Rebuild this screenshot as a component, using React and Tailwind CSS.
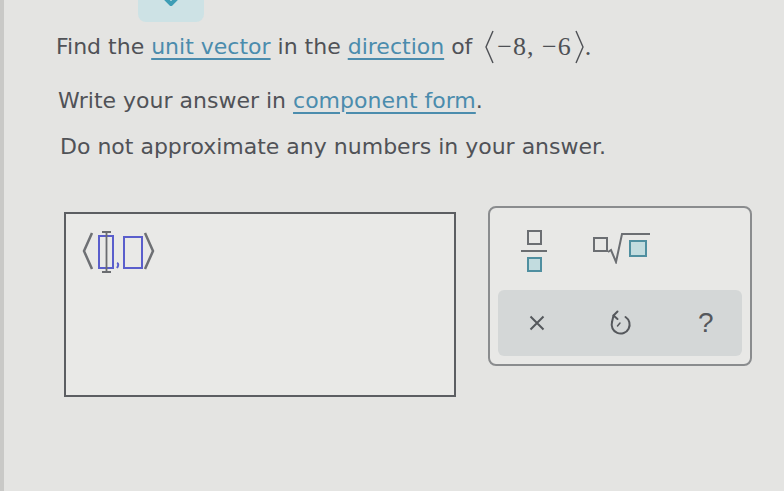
import React from "react";

// small outlined box used in the math templates
function Slot({ teal }) {
  return (
    <span
      className={
        teal
          ? "inline-block w-[15px] h-[15px] border-2 border-[#4f8fa0] bg-[#c2dcdf]"
          : "inline-block w-[15px] h-[15px] border-2 border-[#6b6e72]"
      }
    />
  );
}

function VectorTemplate() {
  return (
    <svg width="76" height="46" viewBox="0 0 76 46" fill="none">
      {/* angle brackets */}
      <path d="M11 4 L3 22 L11 40" stroke="#6e7074" strokeWidth="2.5" />
      <path d="M64 4 L72 22 L64 40" stroke="#6e7074" strokeWidth="2.5" />
      {/* first slot + cursor */}
      <rect x="18" y="7" width="14" height="32" stroke="#5a5ecc" strokeWidth="2" />
      <path d="M21 3 H30 M25.5 3 V43 M21 43 H30" stroke="#6a6c70" strokeWidth="1.8" />
      {/* comma */}
      <path d="M36 34 q2.5 1 0 5" stroke="#5a5ecc" strokeWidth="2" />
      {/* second slot */}
      <rect x="43" y="8" width="18" height="31" stroke="#5a5ecc" strokeWidth="2" />
    </svg>
  );
}

function Angle({ right }) {
  return (
    <svg width="11" height="34" viewBox="0 0 11 34" fill="none" className={right ? "ml-[2px]" : "mr-[2px]"}>
      <path d={right ? "M2 1 L9 17 L2 33" : "M9 1 L2 17 L9 33"} stroke="#4e5055" strokeWidth="1.4" />
    </svg>
  );
}

function Fraction() {
  return (
    <div className="flex flex-col items-center gap-[5px]">
      <Slot />
      <span className="block w-[26px] h-[2px] bg-[#6b6e72]" />
      <Slot teal />
    </div>
  );
}

function SqrtIcon() {
  return (
    <div className="flex items-end">
      <span className="mb-[5px]">
        <Slot />
      </span>
      <svg width="44" height="32" viewBox="0 0 44 32" fill="none" className="-ml-[1px]">
        <path d="M1 20 L4 18 L9 30 L15 2 H43" stroke="#6b6e72" strokeWidth="2" />
        <rect x="23" y="9" width="16" height="15" fill="#c2dcdf" stroke="#4f8fa0" strokeWidth="2" />
      </svg>
    </div>
  );
}

function UndoIcon() {
  return (
    <svg width="24" height="26" viewBox="0 0 24 26" fill="none">
      <path d="M9.5 1.5 L5.5 5.5 L9.5 9" stroke="#55585c" strokeWidth="2" strokeLinecap="round" strokeLinejoin="round" />
      <path d="M5.5 5.5 L4 12" stroke="#55585c" strokeWidth="2" strokeLinecap="round" />
      <path d="M4 12 A9 9 0 1 0 17.5 7" stroke="#55585c" strokeWidth="2" strokeLinecap="round" />
      <path d="M12 13 L9.5 16" stroke="#55585c" strokeWidth="1.5" strokeLinecap="round" />
    </svg>
  );
}

export default function App() {
  const link = "text-[#4b8cad] underline decoration-[1.5px] underline-offset-[4px]";

  return (
    <div className="w-[784px] h-[491px] bg-[#e4e4e2] overflow-hidden font-['DejaVu_Sans',sans-serif] text-[#505257] border-l-[4px] border-[#c9c9c7]">
      {/* collapse button at top */}
      <div className="ml-[134px] w-[66px] h-[22px] bg-[#cde2e5] rounded-b-[8px] flex justify-center">
        <svg width="26" height="8" viewBox="0 0 26 8" fill="none">
          <path d="M3 -6 L13 4 L23 -6" stroke="#3e9db5" strokeWidth="4" strokeLinejoin="round" />
        </svg>
      </div>

      {/* question text */}
      <div className="pl-[52px] mt-[8px] text-[22px] leading-[30px] flex flex-col gap-[22px]">
        <p className="flex items-center">
          <span>
            Find the <span className={link}>unit vector</span> in the{" "}
            <span className={link}>direction</span> of
          </span>
          <span className="ml-[12px] font-['Liberation_Serif',serif] text-[26px] text-[#4e5055] tracking-[1px] flex items-center">
            <Angle />−8, −6<Angle right />.
          </span>
        </p>
        <p className="ml-[2px]">
          Write your answer in <span className={link}>component form</span>.
        </p>
        <p className="ml-[4px] -mt-[6px]">Do not approximate any numbers in your answer.</p>
      </div>

      {/* answer area */}
      <div className="flex items-start mt-[44px] ml-[60px] gap-[32px]">
        <div className="mt-[6px] w-[392px] h-[185px] border-2 border-[#5c5e62] bg-[#e9e9e7] pl-[15px] pt-[15px]">
          <VectorTemplate />
        </div>

        <div className="w-[264px] h-[160px] border-2 border-[#8a8c8e] rounded-[8px] bg-[#e8e8e6] p-[8px] flex flex-col">
          <div className="flex items-start gap-[46px] pl-[23px] pt-[14px] h-[74px]">
            <Fraction />
            <div className="mt-[2px]">
              <SqrtIcon />
            </div>
          </div>
          <div className="flex-1 bg-[#d4d7d7] rounded-[6px] flex items-center pl-[31px] text-[#55585c]">
            <svg width="16" height="16" viewBox="0 0 16 16" fill="none">
              <path d="M1.5 1.5 L14.5 14.5 M14.5 1.5 L1.5 14.5" stroke="#55585c" strokeWidth="2" />
            </svg>
            <span className="ml-[63px]">
              <UndoIcon />
            </span>
            <span className="ml-[66px] text-[28px] leading-none font-['Liberation_Sans',sans-serif] font-light">?</span>
          </div>
        </div>
      </div>
    </div>
  );
}
